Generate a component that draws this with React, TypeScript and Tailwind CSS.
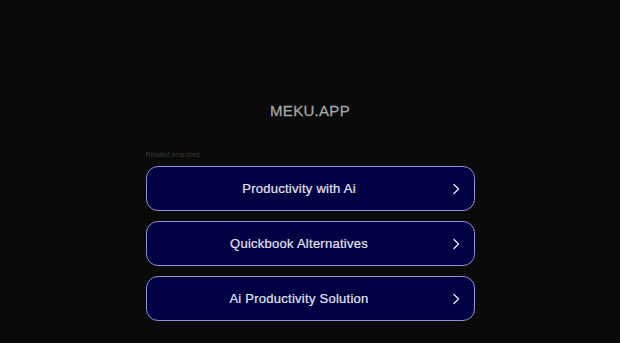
const searches = [
  "Productivity with Ai",
  "Quickbook Alternatives",
  "Ai Productivity Solution",
];

export default function App() {
  return (
    <div className="h-[343px] w-full overflow-hidden bg-[#0a0a0a] font-['Liberation_Sans',Arial,sans-serif]">
      <div className="flex flex-col items-center pt-[102px]">
        <h1 className="text-[15px] font-normal leading-[18px] tracking-[0.02em] text-[#a6a6a6] [-webkit-text-stroke:0.3px_#a6a6a6]">
          MEKU.APP
        </h1>
      </div>
      <div className="mx-auto mt-[30px] w-[329px]">
        <p className="mb-[7px] text-[7px] leading-[9px] text-[#3a3a3a]">
          Related searches
        </p>
        <div className="flex flex-col gap-[10px]">
          {searches.map((s) => (
            <div
              key={s}
              className="flex h-[45px] items-center rounded-[12px] border border-[#8f93d6] bg-[#000042] pl-[14px] pr-[12px]"
            >
              <span className="flex-1 pr-[12px] text-center text-[13px] tracking-[0.02em] text-[#e4e4f2] [-webkit-text-stroke:0.2px_#e4e4f2]">
                {s}
              </span>
              <svg width="12" height="12" viewBox="0 0 12 12" fill="none">
                <path
                  d="M4 1.5 L8.5 6 L4 10.5"
                  stroke="#e4e4f2"
                  strokeWidth="1.4"
                  strokeLinecap="round"
                  strokeLinejoin="round"
                />
              </svg>
            </div>
          ))}
        </div>
      </div>
    </div>
  );
}
